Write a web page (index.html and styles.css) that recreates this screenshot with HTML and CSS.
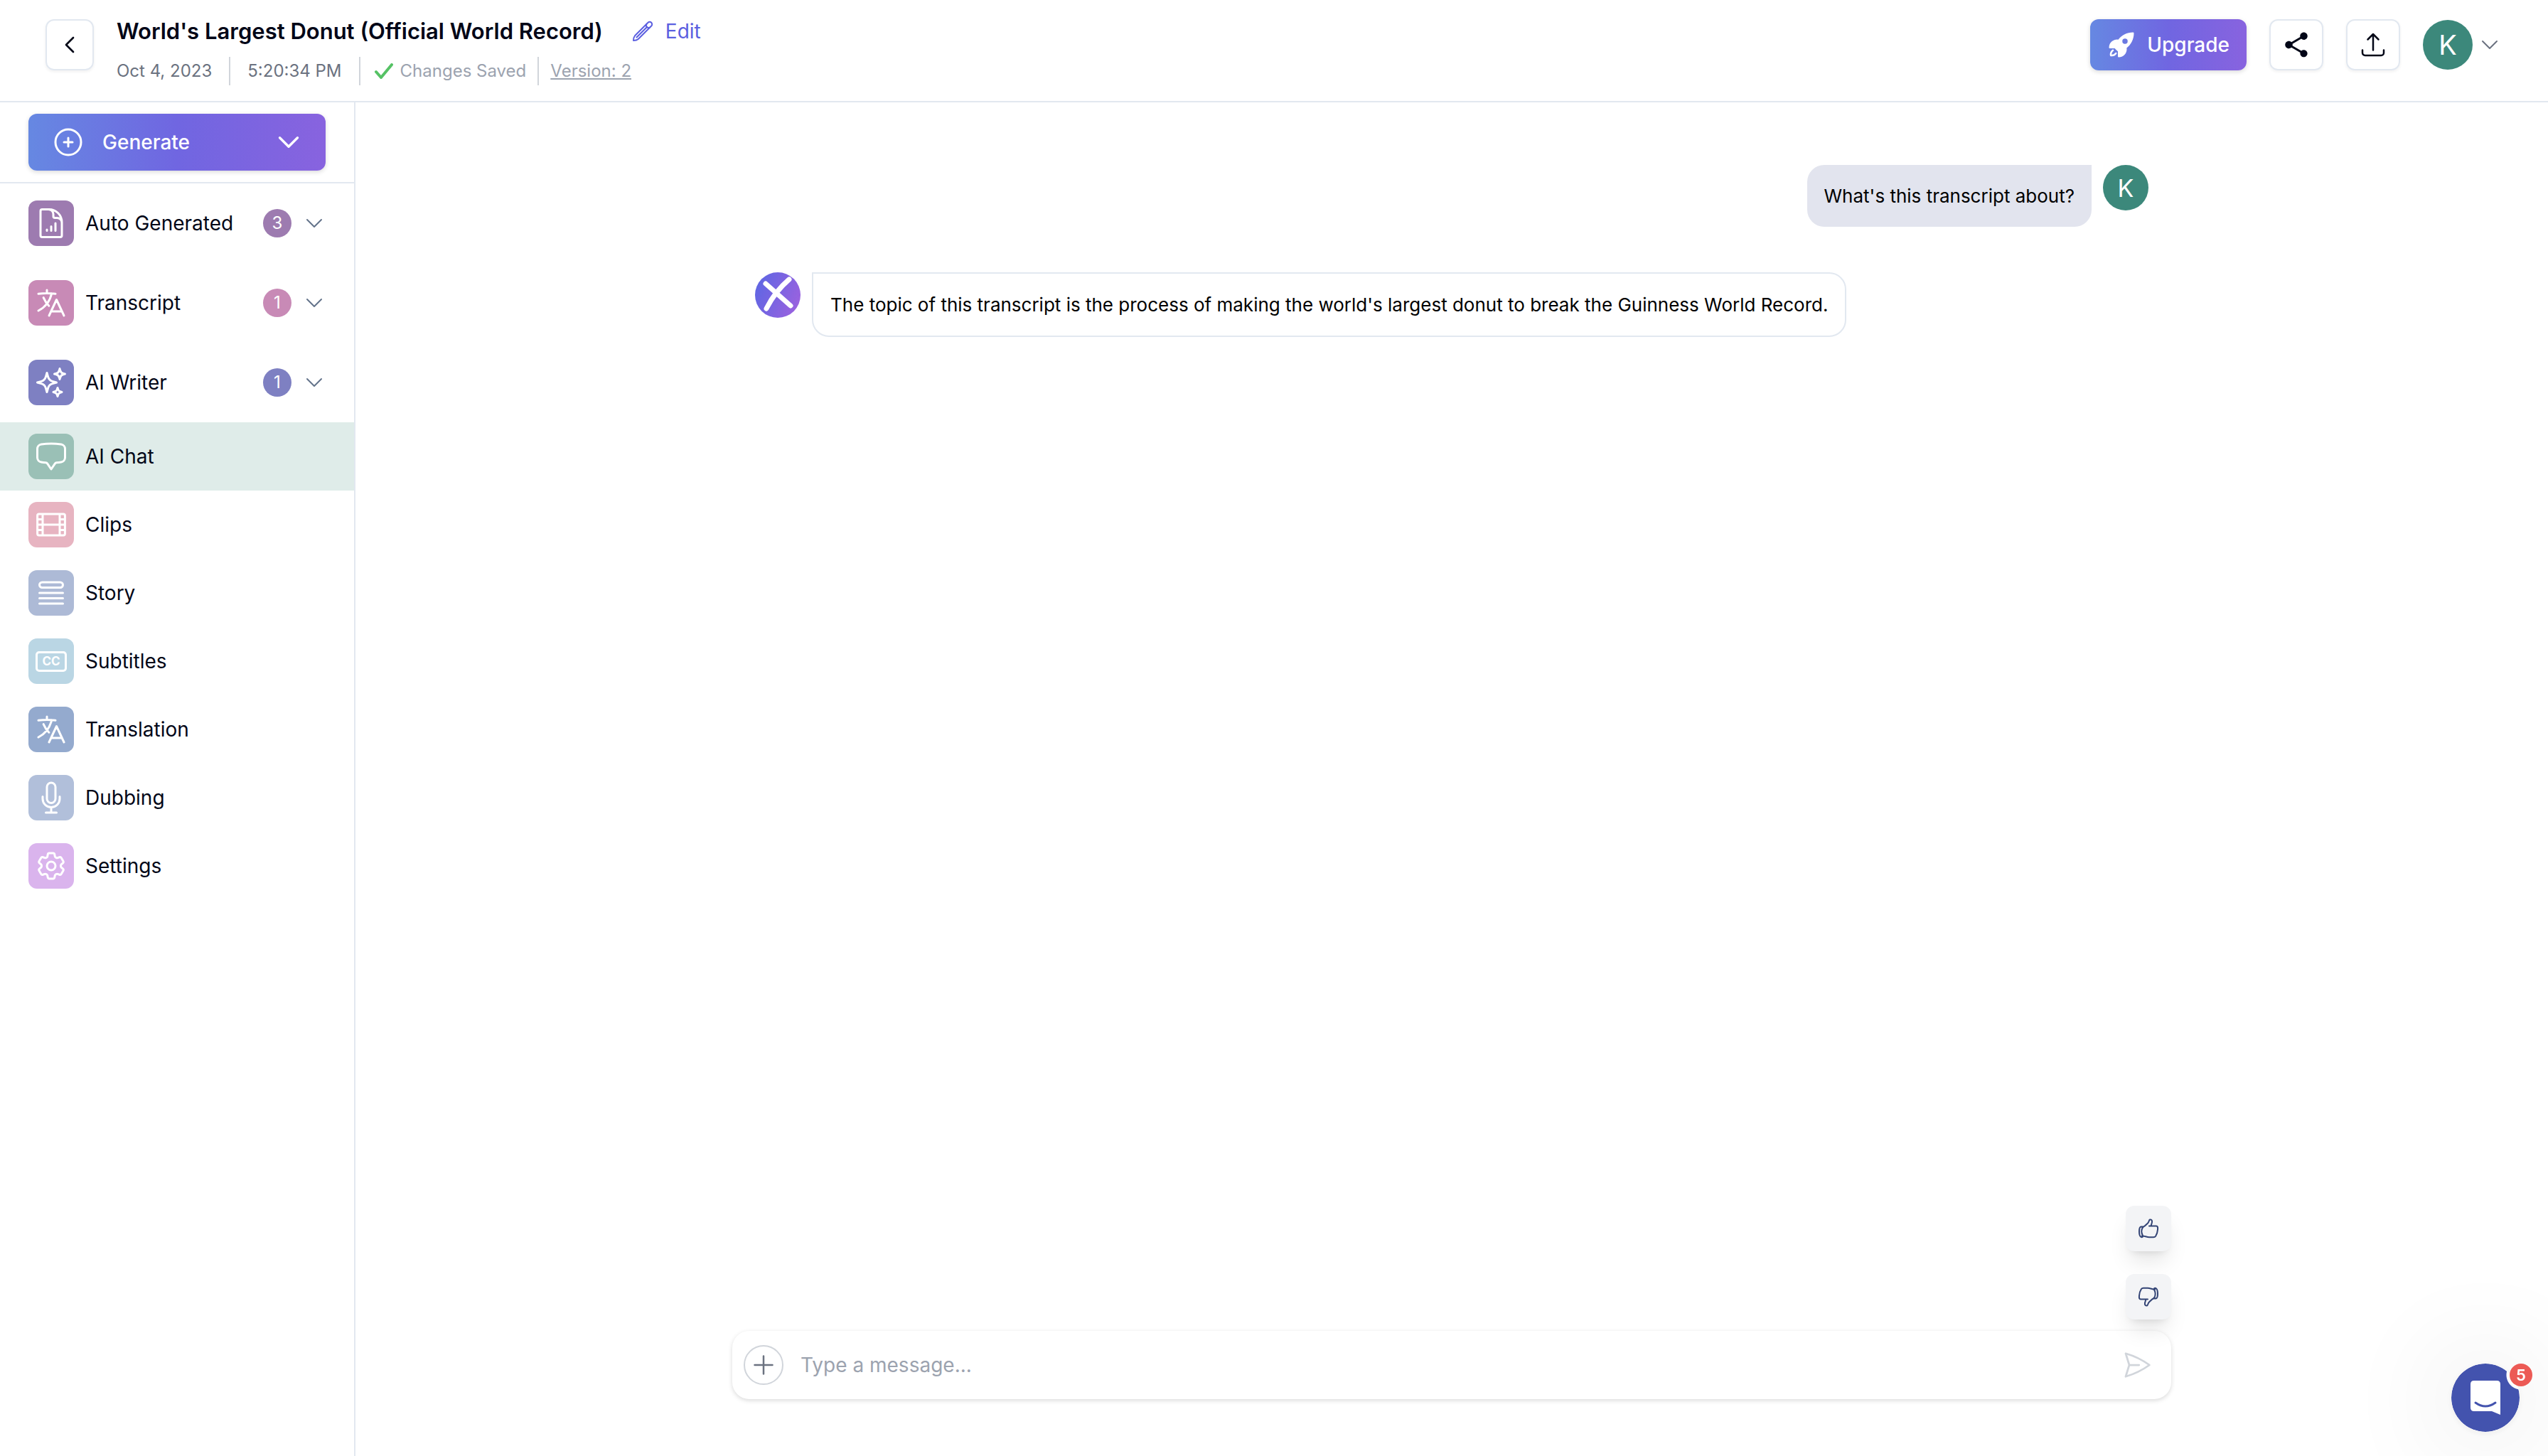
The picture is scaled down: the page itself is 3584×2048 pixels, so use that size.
FILE: index.html
```html
<!DOCTYPE html>
<html lang="en">
<head>
    <meta charset="UTF-8">
    <meta name="viewport" content="width=device-width, initial-scale=1.0">
    <title>World's Largest Donut (Official World Record)</title>
    <link rel="stylesheet" href="styles.css">
</head>
<body>
    <!-- shared icon shapes -->
    <svg class="sprite" aria-hidden="true">
        <symbol id="chevron-down" viewBox="0 0 24 24">
            <path d="m19.5 8.25-7.5 7.5-7.5-7.5"/>
        </symbol>
        <symbol id="language" viewBox="0 0 24 24">
            <path d="m10.5 21 5.25-11.25L21 21m-9-3h7.5M3 5.621a48.474 48.474 0 0 1 6-.371m0 0c1.12 0 2.233.038 3.334.114M9 5.25V3m3.334 2.364C11.176 10.658 7.69 15.08 3 17.502m9.334-12.138c.896.061 1.785.147 2.666.257m-4.589 8.495a18.023 18.023 0 0 1-3.827-5.802"/>
        </symbol>
        <symbol id="thumb-up" viewBox="0 0 32 32">
            <path d="M7.500 14.500C11 13 13 10.500 15 8.500 17 7 16.500 4 18 3.500c2-.5 3.500 1 3 3.500-.3 2.500-1.500 4-1.200 5.500H27c2 0 2.300 2 2 5-.3 4.500-2 8-3 9.500-.7 1-2 1.200-3 1.200h-6c-3 0-6-1.500-10-2M17 12.500h3"/>
            <path d="M8 13.500H5.500C3.500 14 3 17 3 20s.7 6.500 2 7.500c1 .8 2.500.5 3 0 .6-.6.2-1-.2-1.700C6 22 6 17.500 8 14.500c.4-.5.4-.9 0-1Z"/>
        </symbol>
    </svg>

    <header class="header">
        <button class="icon-button back" aria-label="Back">
            <svg class="icon icon-sm" viewBox="0 0 24 24"><path d="M15.75 19.5 8.25 12l7.5-7.5"/></svg>
        </button>
        <div class="project">
            <div class="title-row">
                <h1>World's Largest Donut (Official World Record)</h1>
                <button class="edit">
                    <svg class="icon icon-md" viewBox="0 0 32 32"><path d="M3 29C3 26 3.500 24 5 22.300L23.500 3.800a3.300 3.300 0 0 1 4.700 4.700L9.700 27C8 28.500 6 29 3 29ZM7.500 24.500 21.800 10.200"/><path d="M21.500 5.800a3.400 3.400 0 0 0 4.700 4.700"/></svg>
                    Edit
                </button>
            </div>
            <div class="meta">
                <span class="date">Oct 4, 2023</span>
                <span class="time">5:20:34 PM</span>
                <span class="saved">
                    <svg class="icon check" viewBox="0 0 26 22"><path d="M2 12l7 8L24 2"/></svg>
                    Changes Saved
                </span>
                <a href="#" class="version">Version: 2</a>
            </div>
        </div>
        <div class="actions">
            <button class="upgrade">
                <svg class="rocket" viewBox="0 0 24 24"><path fill-rule="evenodd" d="M9.315 7.584C12.195 3.883 16.695 1.500 21.750 1.500a.75.75 0 0 1 .75.75c0 5.056-2.383 9.555-6.084 12.436A6.750 6.750 0 0 1 9.750 22.500a.75.75 0 0 1-.75-.75v-4.131A15.838 15.838 0 0 1 6.382 15H2.250a.75.75 0 0 1-.75-.75 6.750 6.750 0 0 1 7.815-6.666ZM15 6.750a2.250 2.250 0 1 0 0 4.500 2.250 2.250 0 0 0 0-4.500Z"/><path d="M5.260 17.242a.75.75 0 1 0-.897-1.203 5.243 5.243 0 0 0-2.050 5.022.75.75 0 0 0 .625.627 5.243 5.243 0 0 0 5.022-2.051.75.75 0 1 0-1.202-.897 3.744 3.744 0 0 1-3.008 1.510c0-1.230.592-2.323 1.510-3.008Z"/></svg>
                Upgrade
            </button>
            <button class="icon-button" aria-label="Share">
                <svg class="share" viewBox="0 0 24 24"><path d="M18 16.080c-.76 0-1.440.3-1.960.77L8.910 12.700c.05-.23.09-.46.09-.7s-.04-.47-.09-.7l7.050-4.110c.54.5 1.250.81 2.040.81 1.660 0 3-1.340 3-3s-1.340-3-3-3-3 1.340-3 3c0 .24.04.47.09.7L8.040 9.810C7.500 9.310 6.790 9 6 9c-1.660 0-3 1.340-3 3s1.340 3 3 3c.79 0 1.500-.31 2.040-.81l7.120 4.160c-.05.21-.08.43-.08.65 0 1.610 1.310 2.920 2.920 2.920s2.920-1.310 2.920-2.920-1.310-2.920-2.920-2.920z"/></svg>
            </button>
            <button class="icon-button" aria-label="Export">
                <svg class="icon icon-lg" viewBox="0 0 24 24"><path d="M3 16.500v2.250A2.250 2.250 0 0 0 5.250 21h13.500A2.250 2.250 0 0 0 21 18.750V16.500m-13.500-9L12 3m0 0 4.500 4.500M12 3v13.500"/></svg>
            </button>
            <button class="account" aria-label="Account">
                <span class="avatar avatar-lg">K</span>
                <svg class="icon icon-sm"><use href="#chevron-down"/></svg>
            </button>
        </div>
    </header>

    <div class="layout">
        <aside class="sidebar">
            <div class="generate-box">
                <button class="generate">
                    <svg class="icon plus-circle" viewBox="0 0 24 24"><path d="M12 9v6m3-3H9m12 0a9 9 0 1 1-18 0 9 9 0 0 1 18 0Z"/></svg>
                    <span>Generate</span>
                    <svg class="icon icon-lg"><use href="#chevron-down"/></svg>
                </button>
            </div>
            <nav class="menu">
                <a href="#" class="menu-item group auto">
                    <span class="tile"><svg class="icon" viewBox="0 0 24 24"><path d="M19.500 14.250v-2.625a3.375 3.375 0 0 0-3.375-3.375h-1.500A1.125 1.125 0 0 1 13.500 7.125v-1.500a3.375 3.375 0 0 0-3.375-3.375H8.250M9 16.500v.75m3-3v3M15 12v5.250m-4.500-15H5.625c-.621 0-1.125.504-1.125 1.125v17.250c0 .621.504 1.125 1.125 1.125h12.750c.621 0 1.125-.504 1.125-1.125V11.250a9 9 0 0 0-9-9Z"/></svg></span>
                    <span class="label">Auto Generated</span>
                    <span class="count">3</span>
                    <svg class="icon icon-sm"><use href="#chevron-down"/></svg>
                </a>
                <a href="#" class="menu-item group transcript">
                    <span class="tile"><svg class="icon"><use href="#language"/></svg></span>
                    <span class="label">Transcript</span>
                    <span class="count">1</span>
                    <svg class="icon icon-sm"><use href="#chevron-down"/></svg>
                </a>
                <a href="#" class="menu-item group writer">
                    <span class="tile"><svg class="icon" viewBox="0 0 24 24"><path d="M9.813 15.904 9 18.750l-.813-2.846a4.500 4.500 0 0 0-3.090-3.090L2.250 12l2.846-.813a4.500 4.500 0 0 0 3.090-3.090L9 5.250l.813 2.846a4.500 4.500 0 0 0 3.090 3.090L15.750 12l-2.846.813a4.500 4.500 0 0 0-3.090 3.090ZM18.259 8.715 18 9.750l-.259-1.035a3.375 3.375 0 0 0-2.455-2.456L14.250 6l1.036-.259a3.375 3.375 0 0 0 2.455-2.456L18 2.250l.259 1.035a3.375 3.375 0 0 0 2.456 2.456L21.750 6l-1.035.259a3.375 3.375 0 0 0-2.456 2.456ZM16.894 20.567 16.500 21.750l-.394-1.183a2.250 2.250 0 0 0-1.423-1.423L13.500 18.750l1.183-.394a2.250 2.250 0 0 0 1.423-1.423l.394-1.183.394 1.183a2.250 2.250 0 0 0 1.423 1.423l1.183.394-1.183.394a2.250 2.250 0 0 0-1.423 1.423Z"/></svg></span>
                    <span class="label">AI Writer</span>
                    <span class="count">1</span>
                    <svg class="icon icon-sm"><use href="#chevron-down"/></svg>
                </a>
                <a href="#" class="menu-item chat active">
                    <span class="tile"><svg class="icon" viewBox="0 0 24 24"><path d="M2.250 12.760c0 1.600 1.123 2.994 2.707 3.227 1.068.157 2.148.279 3.238.364.466.037.893.281 1.153.671L12 21l2.652-3.978c.26-.39.687-.634 1.153-.67 1.090-.086 2.170-.208 3.238-.365 1.584-.233 2.707-1.626 2.707-3.228V6.741c0-1.602-1.123-2.995-2.707-3.228A48.394 48.394 0 0 0 12 3c-2.392 0-4.744.175-7.043.513C3.373 3.746 2.250 5.140 2.250 6.741v6.018Z"/></svg></span>
                    <span class="label">AI Chat</span>
                </a>
                <a href="#" class="menu-item clips">
                    <span class="tile"><svg class="icon" viewBox="0 0 24 24"><path d="M3.400 4.500h17.200q1.100 0 1.100 1.100v12.800q0 1.100-1.100 1.100H3.400q-1.100 0-1.100-1.100V5.600q0-1.100 1.100-1.100ZM6 4.500v15M18 4.500v15M6 12h12M2.250 8.250H6M2.250 12H6M2.250 15.750H6M18 8.250h3.750M18 12h3.750M18 15.750h3.750"/></svg></span>
                    <span class="label">Clips</span>
                </a>
                <a href="#" class="menu-item story">
                    <span class="tile"><svg class="icon" viewBox="0 0 24 24"><path d="M3.750 12h16.500m-16.500 3.750h16.500M3.750 19.500h16.500M5.625 4.500h12.750a1.875 1.875 0 0 1 0 3.750H5.625a1.875 1.875 0 0 1 0-3.750Z"/></svg></span>
                    <span class="label">Story</span>
                </a>
                <a href="#" class="menu-item subtitles">
                    <span class="tile"><span class="cc">CC</span></span>
                    <span class="label">Subtitles</span>
                </a>
                <a href="#" class="menu-item translation">
                    <span class="tile"><svg class="icon"><use href="#language"/></svg></span>
                    <span class="label">Translation</span>
                </a>
                <a href="#" class="menu-item dubbing">
                    <span class="tile"><svg class="icon" viewBox="0 0 24 24"><path d="M12 18.750a6 6 0 0 0 6-6v-1.500m-6 7.500a6 6 0 0 1-6-6v-1.500m6 7.500v3.750m-3.750 0h7.500M12 15.750a3 3 0 0 1-3-3V4.500a3 3 0 1 1 6 0v8.250a3 3 0 0 1-3 3Z"/></svg></span>
                    <span class="label">Dubbing</span>
                </a>
                <a href="#" class="menu-item settings">
                    <span class="tile"><svg class="icon" viewBox="0 0 24 24"><path d="M9.594 3.940c.09-.542.56-.94 1.110-.94h2.593c.55 0 1.020.398 1.110.94l.213 1.281c.063.374.313.686.645.87.074.04.147.083.22.127.325.196.72.257 1.075.124l1.217-.456a1.125 1.125 0 0 1 1.370.49l1.296 2.247a1.125 1.125 0 0 1-.26 1.431l-1.003.827c-.293.241-.438.613-.43.992a7.723 7.723 0 0 1 0 .255c-.008.378.137.75.43.991l1.004.827c.424.35.534.955.26 1.430l-1.298 2.247a1.125 1.125 0 0 1-1.369.491l-1.217-.456c-.355-.133-.75-.072-1.076.124a6.470 6.470 0 0 1-.22.128c-.331.183-.581.495-.644.869l-.213 1.281c-.09.543-.56.940-1.110.940h-2.594c-.55 0-1.019-.398-1.110-.94l-.213-1.281c-.062-.374-.312-.686-.644-.87a6.520 6.520 0 0 1-.22-.127c-.325-.196-.72-.257-1.076-.124l-1.217.456a1.125 1.125 0 0 1-1.369-.49l-1.297-2.247a1.125 1.125 0 0 1 .26-1.431l1.004-.827c.292-.24.437-.613.43-.991a6.932 6.932 0 0 1 0-.255c.007-.38-.138-.751-.43-.992l-1.004-.827a1.125 1.125 0 0 1-.26-1.430l1.297-2.247a1.125 1.125 0 0 1 1.370-.491l1.216.456c.356.133.751.072 1.076-.124.072-.044.146-.086.22-.128.332-.183.582-.495.644-.869l.214-1.280Z"/><path d="M15 12a3 3 0 1 1-6 0 3 3 0 0 1 6 0Z"/></svg></span>
                    <span class="label">Settings</span>
                </a>
            </nav>
        </aside>

        <main class="chat-main">
            <div class="messages">
                <div class="message user">
                    <p>What's this transcript about?</p>
                    <span class="avatar">K</span>
                </div>
                <div class="message bot">
                    <svg class="bot-avatar" viewBox="0 0 64 64">
                        <defs>
                            <linearGradient id="bot-fill" x1="0" y1="0.300" x2="1" y2="0.700">
                                <stop offset="0" stop-color="#5f66e3"/>
                                <stop offset="1" stop-color="#9b62df"/>
                            </linearGradient>
                        </defs>
                        <circle cx="32" cy="32" r="32" fill="url(#bot-fill)"/>
                        <path d="M15 16 50 47M48 10Q28 27 16 51"/>
                    </svg>
                    <p>The topic of this transcript is the process of making the world's largest donut to break the Guinness World Record.</p>
                </div>
            </div>
            <div class="feedback">
                <button aria-label="Good answer"><svg class="icon icon-md"><use href="#thumb-up"/></svg></button>
                <button aria-label="Bad answer"><svg class="icon icon-md flipped"><use href="#thumb-up"/></svg></button>
            </div>
            <form class="composer">
                <button type="button" class="add" aria-label="Add">
                    <svg class="icon icon-lg" viewBox="0 0 24 24"><path d="M12 4.500v15m7.500-7.500h-15"/></svg>
                </button>
                <input type="text" placeholder="Type a message..." aria-label="Type a message">
                <button type="submit" class="send" aria-label="Send">
                    <svg class="icon send-icon" viewBox="0 0 24 24"><path d="M6 12 3.269 3.125A59.769 59.769 0 0 1 21.485 12 59.768 59.768 0 0 1 3.270 20.875L5.999 12Zm0 0h7.500"/></svg>
                </button>
            </form>
        </main>
    </div>

    <button class="launcher" aria-label="Open support chat">
        <span class="launcher-disc">
            <svg viewBox="0 0 42 48"><path fill="#fff" d="M5 0h32q5 0 5 5v43l-12-5H5q-5 0-5-5V5q0-5 5-5Z"/><path class="smile" d="M7 31q14 10 28 0"/></svg>
        </span>
        <span class="unread">5</span>
    </button>
</body>
</html>
```

FILE: styles.css
```css
* {
    box-sizing: border-box;
}
body {
    margin: 0;
    min-height: 100vh;
    display: flex;
    flex-direction: column;
    font-family: Inter, sans-serif;
    font-size: 28px;
    line-height: 40px;
    color: #020617;
    background-color: #fff;
}
button,
input {
    font: inherit;
    color: inherit;
    border: none;
    background: none;
    padding: 0;
}
button {
    display: flex;
    align-items: center;
    justify-content: center;
    cursor: pointer;
}
a {
    color: inherit;
    text-decoration: none;
}
h1,
p {
    margin: 0;
}
.sprite {
    display: none;
}

/* icons */
.icon {
    fill: none;
    stroke: currentColor;
    stroke-width: 1.5;
    stroke-linecap: round;
    stroke-linejoin: round;
    width: 48px;
    height: 48px;
    flex-shrink: 0;
}
.icon-sm,
.icon-md {
    width: 32px;
    height: 32px;
}
.icon-lg {
    width: 40px;
    height: 40px;
}

/* header */
.header {
    display: flex;
    align-items: flex-start;
    padding: 24px 66px 24px 64px;
    height: 144px;
    border-bottom: 2px solid #e2e8f0;
}
.icon-button {
    width: 76px;
    height: 72px;
    margin-top: 3px;
    border: 2px solid #e2e8f0;
    border-radius: 12px;
    box-shadow: 0 2px 4px rgba(0, 0, 0, 0.06);
}
.back {
    width: 68px;
}
.back .icon {
    stroke-width: 2;
}
.project {
    margin-left: 32px;
}
.title-row {
    display: flex;
    gap: 40px;
}
.title-row h1 {
    font-size: 31px;
    font-weight: 600;
    line-height: 40px;
}
.edit {
    gap: 16px;
    color: #5b5fe0;
}
.edit .icon {
    stroke-width: 2;
}
.meta {
    display: flex;
    align-items: center;
    margin-top: 16px;
    font-size: 24px;
    color: #6b7280;
}
.meta > * {
    display: flex;
    align-items: center;
}
.date {
    padding-right: 24px;
}
.time {
    padding: 0 24px;
}
.time,
.saved,
.version {
    height: 40px;
    border-left: 2px solid #d1d5db;
}
.saved {
    gap: 10px;
    padding: 0 16px 0 20px;
    color: #9ca3af;
}
.check {
    width: 26px;
    height: 22px;
    color: #56c265;
    stroke-width: 4;
}
.version {
    padding-left: 16px;
    color: #9ca3af;
    text-decoration: underline;
}
.actions {
    display: flex;
    gap: 32px;
    margin-left: auto;
}
.upgrade,
.generate {
    color: #fff;
    font-weight: 500;
    border-radius: 12px;
    background-image: linear-gradient(to right, #6688e2, #7066e1 50%, #8863df);
    box-shadow: 0 2px 6px rgba(0, 0, 0, 0.15);
}
.upgrade {
    gap: 16px;
    height: 72px;
    margin-top: 3px;
    padding: 0 24px;
}
.rocket {
    width: 40px;
    height: 40px;
    fill: #fff;
}
.share {
    width: 42px;
    height: 42px;
    fill: #020617;
}
.account {
    gap: 8px;
    height: 72px;
    margin-top: 3px;
    color: #6b7280;
}
.avatar {
    display: flex;
    align-items: center;
    justify-content: center;
    width: 64px;
    height: 64px;
    flex-shrink: 0;
    border-radius: 50%;
    background-color: #3c887b;
    color: #fff;
    font-size: 34px;
}
.avatar-lg {
    width: 70px;
    height: 70px;
    font-size: 38px;
}

/* sidebar */
.layout {
    flex-grow: 1;
    display: flex;
}
.sidebar {
    width: 500px;
    flex-shrink: 0;
    border-right: 2px solid #e2e8f0;
}
.generate-box {
    padding: 16px 40px;
    border-bottom: 2px solid #e2e8f0;
}
.generate {
    width: 100%;
    height: 80px;
    padding: 0 32px;
    gap: 24px;
}
.generate span {
    flex-grow: 1;
    text-align: left;
}
.generate .icon-lg {
    stroke-width: 2;
}
.plus-circle {
    width: 48px;
    height: 48px;
}
.menu-item {
    display: flex;
    align-items: center;
    height: 96px;
    padding: 0 40px;
}
.group {
    height: 112px;
}
.active {
    background-color: #dfece9;
}
.tile {
    display: flex;
    align-items: center;
    justify-content: center;
    width: 64px;
    height: 64px;
    border-radius: 12px;
    color: #fff;
}
.label {
    flex-grow: 1;
    margin-left: 16px;
}
.count {
    display: flex;
    align-items: center;
    justify-content: center;
    width: 40px;
    height: 40px;
    margin-right: 16px;
    border-radius: 50%;
    color: #fff;
    font-size: 24px;
}
.menu-item > .icon-sm {
    color: #64748b;
}
.auto .tile,
.auto .count {
    background-color: #9d7bb0;
}
.transcript .tile,
.transcript .count {
    background-color: #c88ab6;
}
.writer .tile,
.writer .count {
    background-color: #7e80c2;
}
.chat .tile {
    background-color: #9ac0b6;
}
.clips .tile {
    background-color: #e7b4c1;
}
.story .tile {
    background-color: #adbad6;
}
.subtitles .tile {
    background-color: #bad6e4;
}
.translation .tile {
    background-color: #94aace;
}
.dubbing .tile {
    background-color: #b1bfda;
}
.settings .tile {
    background-color: #dab4ed;
}
.cc {
    width: 44px;
    height: 29px;
    border: 3px solid #fff;
    border-radius: 5px;
    font-size: 17px;
    font-weight: 700;
    line-height: 23px;
    text-align: center;
}

/* chat */
.chat-main {
    flex-grow: 1;
    display: flex;
    flex-direction: column;
    padding: 88px 32px 80px;
}
.chat-main > * {
    width: 100%;
    max-width: 2024px;
    margin: 0 auto;
}
.messages {
    flex-grow: 1;
    display: flex;
    flex-direction: column;
    gap: 64px;
    padding: 0 32px;
}
.message {
    display: flex;
    gap: 16px;
    font-size: 26px;
    line-height: 39px;
    color: #000;
}
.message p {
    padding: 24px;
    border-radius: 24px;
}
.user {
    justify-content: flex-end;
}
.user p {
    border-top-right-radius: 0;
    background-color: #e2e4ee;
}
.bot p {
    border: 2px solid #e2e8f0;
    border-top-left-radius: 0;
}
.bot-avatar {
    width: 64px;
    height: 64px;
    flex-shrink: 0;
}
.bot-avatar path {
    fill: none;
    stroke: #fff;
    stroke-width: 7;
    stroke-linecap: round;
}
.feedback {
    display: flex;
    flex-direction: column;
    align-items: flex-end;
    gap: 32px;
}
.feedback button {
    width: 64px;
    height: 64px;
    border-radius: 12px;
    background-color: #f3f4f6;
    color: #334475;
    box-shadow: 0 20px 30px -6px rgba(0, 0, 0, 0.1), 0 8px 12px -8px rgba(0, 0, 0, 0.12);
}
.feedback .icon {
    stroke-width: 2;
}
.flipped {
    transform: rotate(180deg);
}
.chat-main .composer {
    display: flex;
    align-items: center;
    height: 96px;
    margin-top: 16px;
    padding: 0 26px 0 16px;
    border-radius: 24px;
    box-shadow: 0 2px 6px rgba(0, 0, 0, 0.15);
}
.add {
    width: 56px;
    height: 56px;
    border: 2px solid #d1d5db;
    border-radius: 50%;
    color: #6b7280;
}
.composer input {
    flex-grow: 1;
    padding: 0 24px;
    outline: none;
}
.composer input::placeholder {
    color: #9ca3af;
    opacity: 1;
}
.send {
    color: #d1d5db;
}
.send-icon {
    width: 44px;
    height: 44px;
}

/* support launcher */
.launcher {
    position: fixed;
    right: 40px;
    bottom: 34px;
    border-radius: 50%;
    box-shadow: 0 2px 12px rgba(0, 0, 0, 0.06), 0 4px 160px rgba(0, 0, 0, 0.16);
}
.launcher-disc {
    display: flex;
    align-items: center;
    justify-content: center;
    width: 96px;
    height: 96px;
    border-radius: 50%;
    background-color: #4353ae;
    -webkit-mask-image: radial-gradient(circle at 98px 16px, transparent 20px, #000 21px);
    mask-image: radial-gradient(circle at 98px 16px, transparent 20px, #000 21px);
}
.launcher svg {
    width: 42px;
    height: 48px;
}
.smile {
    fill: none;
    stroke: #4353ae;
    stroke-width: 3;
    stroke-linecap: round;
}
.unread {
    position: absolute;
    top: 0;
    right: -18px;
    width: 32px;
    height: 32px;
    border-radius: 50%;
    background-color: #ec5a55;
    color: #fff;
    font-size: 22px;
    font-weight: 600;
    line-height: 32px;
}
```
